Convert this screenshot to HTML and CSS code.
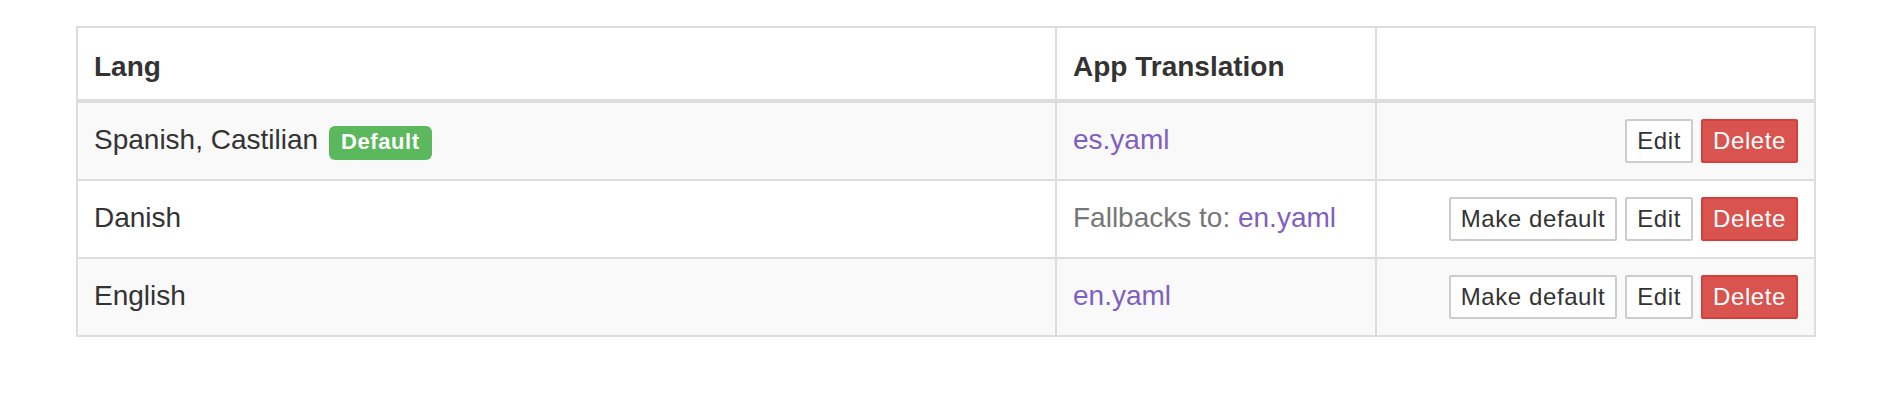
FILE: index.html
```html
<!DOCTYPE html>
<html lang="en">
<head>
    <meta charset="UTF-8">
    <meta name="viewport" content="width=device-width, initial-scale=1.0">
    <title>Languages</title>
    <link rel="stylesheet" href="styles.css">
</head>
<body>
    <div class="wrap">
        <table class="langs">
            <colgroup>
                <col class="c-lang">
                <col class="c-file">
                <col class="c-act">
            </colgroup>
            <thead>
                <tr>
                    <th>Lang</th>
                    <th>App Translation</th>
                    <th></th>
                </tr>
            </thead>
            <tbody>
                <tr>
                    <td>Spanish, Castilian <span class="label">Default</span></td>
                    <td><a href="#">es.yaml</a></td>
                    <td>
                        <div class="actions">
                            <a href="#" class="btn">Edit</a>
                            <a href="#" class="btn btn-danger">Delete</a>
                        </div>
                    </td>
                </tr>
                <tr>
                    <td>Danish</td>
                    <td><span class="muted">Fallbacks to:</span> <a href="#">en.yaml</a></td>
                    <td>
                        <div class="actions">
                            <a href="#" class="btn">Make default</a>
                            <a href="#" class="btn">Edit</a>
                            <a href="#" class="btn btn-danger">Delete</a>
                        </div>
                    </td>
                </tr>
                <tr>
                    <td>English</td>
                    <td><a href="#">en.yaml</a></td>
                    <td>
                        <div class="actions">
                            <a href="#" class="btn">Make default</a>
                            <a href="#" class="btn">Edit</a>
                            <a href="#" class="btn btn-danger">Delete</a>
                        </div>
                    </td>
                </tr>
            </tbody>
        </table>
    </div>
</body>
</html>
```

FILE: styles.css
```css
*{
    margin: 0;
    padding: 0;
    box-sizing: border-box;
}
body{
    background: #fff;
    color: #333;
    font-family: "Liberation Sans", Arial, sans-serif;
    font-size: 28px;
    line-height: 40px;
}
.wrap{
    padding: 26px 0 0 76px;
}
table{
    width: 1738px;
    table-layout: fixed;
    border-collapse: collapse;
    border: 2px solid #ddd;
}
.c-lang{ width: 979px; }
.c-file{ width: 320px; }
.c-act{ width: 439px; }
th,td{
    border: 2px solid #ddd;
    text-align: left;
    vertical-align: top;
    padding: 17px 16px 15px;
}
th{
    font-weight: bold;
    padding: 19px 16px 12px;
    border-bottom: 4px solid #ddd;
}
tbody tr:nth-child(odd){
    background-color: #f9f9f9;
}
a{
    color: #7f5fbf;
    text-decoration: none;
}
.muted{
    color: #777;
}
.label{
    display: inline-block;
    background: #5cb85c;
    color: #fff;
    font-size: 22px;
    font-weight: bold;
    line-height: 22px;
    letter-spacing: 0.6px;
    padding: 5px 12px 7px;
    border-radius: 6px;
    margin-left: 3px;
}
.actions{
    display: flex;
    justify-content: flex-end;
    gap: 8px;
    margin: -1px 0 1px;
}
.btn{
    display: inline-block;
    height: 44px;
    padding: 2px 10px;
    font-size: 24px;
    line-height: 36px;
    letter-spacing: 0.6px;
    color: #333;
    background: #fff;
    border: 2px solid #ccc;
    border-radius: 2px;
    white-space: nowrap;
}
.btn-danger{
    color: #fff;
    background: #d9534f;
    border-color: #d43f3a;
}
```
